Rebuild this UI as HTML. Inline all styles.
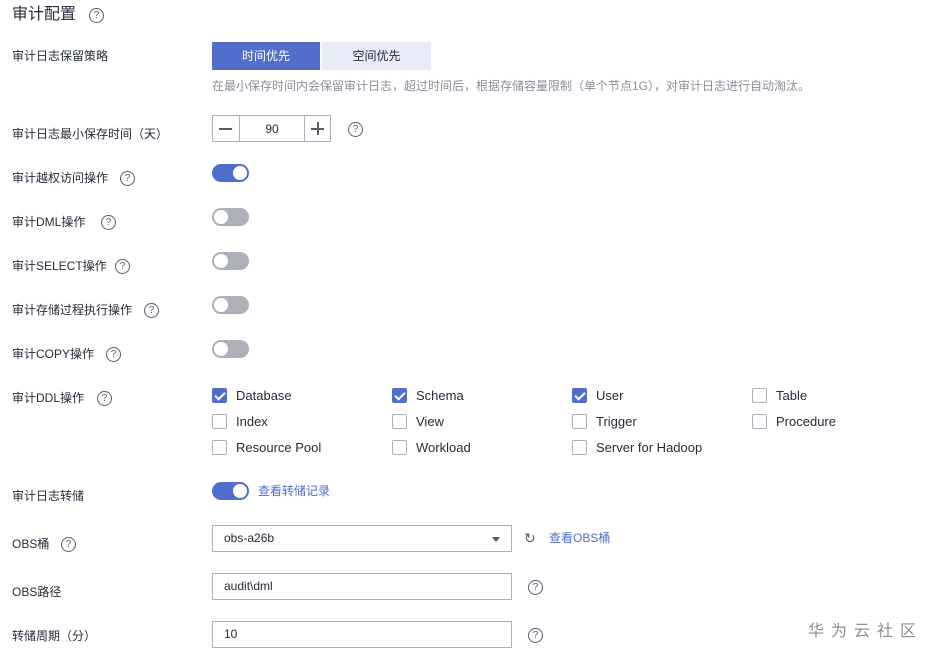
<!DOCTYPE html>
<html><head><meta charset="utf-8"><style>
*{margin:0;padding:0;box-sizing:border-box}
body{width:929px;height:657px;background:#fff;position:relative;overflow:hidden;font-family:"Liberation Sans","Noto Sans CJK SC",sans-serif;color:#252b3a;font-size:12px}
.a{position:absolute;white-space:nowrap}
.lbl{position:absolute;left:12px;font-size:12px;color:#252b3a;line-height:16px}
.q{position:absolute;width:15px;height:15px;border:1px solid #575d6c;border-radius:50%;font-size:10px;line-height:13px;text-align:center;color:#575d6c}
.tg{position:absolute;left:212px;width:37px;height:18px;border-radius:9px;background:#adb0b8}
.tg::after{content:"";position:absolute;left:2px;top:2px;width:14px;height:14px;border-radius:50%;background:#fff}
.tg.on{background:#526ecc}
.tg.on::after{left:21px}
.cb{position:absolute;width:15px;height:15px;border:1px solid #adb0b8;border-radius:2px;background:#fff}
.cb.on{background:#526ecc;border-color:#526ecc}
.cb.on::after{content:"";position:absolute;left:4px;top:1px;width:4px;height:8px;border:solid #fff;border-width:0 2px 2px 0;transform:rotate(45deg)}
.ct{position:absolute;font-size:13px;color:#252b3a;line-height:16px}
.inp{position:absolute;left:212px;width:300px;height:27px;border:1px solid #adb0b8;font-size:12px;line-height:25px;padding-left:11px}
.lnk{color:#526ecc}
</style></head><body>
<div class="a" style="left:12px;top:5px;font-size:16px;line-height:20px">审计配置</div>
<div class="q" style="left:89px;top:8px">?</div>

<div class="lbl" style="top:48px">审计日志保留策略</div>
<div class="a" style="left:212px;top:42px;width:108px;height:28px;background:#526ecc;color:#fff;text-align:center;line-height:28px;font-size:12px">时间优先</div>
<div class="a" style="left:322px;top:42px;width:109px;height:28px;background:#e8ecf8;color:#252b3a;text-align:center;line-height:28px;font-size:12px">空间优先</div>
<div class="a" style="left:212px;top:78px;font-size:12px;color:#8a8e99;line-height:16px">在最小保存时间内会保留审计日志，超过时间后，根据存储容量限制（单个节点1G），对审计日志进行自动淘汰。</div>

<div class="lbl" style="top:126px">审计日志最小保存时间（天）</div>
<div class="a" style="left:212px;top:115px;width:119px;height:27px;border:1px solid #adb0b8"></div>
<div class="a" style="left:239px;top:115px;width:1px;height:27px;background:#adb0b8"></div>
<div class="a" style="left:304px;top:115px;width:1px;height:27px;background:#adb0b8"></div>
<div class="a" style="left:219px;top:128px;width:13px;height:1.5px;background:#575d6c"></div>
<div class="a" style="left:311px;top:128px;width:13px;height:1.5px;background:#575d6c"></div>
<div class="a" style="left:317px;top:122px;width:1.5px;height:13px;background:#575d6c"></div>
<div class="a" style="left:240px;top:121px;width:64px;text-align:center;font-size:12px;line-height:16px">90</div>
<div class="q" style="left:348px;top:122px">?</div>

<div class="lbl" style="top:170px">审计越权访问操作</div><div class="q" style="left:120px;top:171px">?</div>
<div class="tg on" style="top:164px"></div>
<div class="lbl" style="top:214px">审计DML操作</div><div class="q" style="left:101px;top:215px">?</div>
<div class="tg" style="top:208px"></div>
<div class="lbl" style="top:258px">审计SELECT操作</div><div class="q" style="left:115px;top:259px">?</div>
<div class="tg" style="top:252px"></div>
<div class="lbl" style="top:302px">审计存储过程执行操作</div><div class="q" style="left:144px;top:303px">?</div>
<div class="tg" style="top:296px"></div>
<div class="lbl" style="top:346px">审计COPY操作</div><div class="q" style="left:106px;top:347px">?</div>
<div class="tg" style="top:340px"></div>

<div class="lbl" style="top:390px">审计DDL操作</div><div class="q" style="left:97px;top:391px">?</div>
<div class="cb on" style="left:212px;top:388px"></div><div class="ct" style="left:236px;top:388px">Database</div>
<div class="cb on" style="left:392px;top:388px"></div><div class="ct" style="left:416px;top:388px">Schema</div>
<div class="cb on" style="left:572px;top:388px"></div><div class="ct" style="left:596px;top:388px">User</div>
<div class="cb" style="left:752px;top:388px"></div><div class="ct" style="left:776px;top:388px">Table</div>
<div class="cb" style="left:212px;top:414px"></div><div class="ct" style="left:236px;top:414px">Index</div>
<div class="cb" style="left:392px;top:414px"></div><div class="ct" style="left:416px;top:414px">View</div>
<div class="cb" style="left:572px;top:414px"></div><div class="ct" style="left:596px;top:414px">Trigger</div>
<div class="cb" style="left:752px;top:414px"></div><div class="ct" style="left:776px;top:414px">Procedure</div>
<div class="cb" style="left:212px;top:440px"></div><div class="ct" style="left:236px;top:440px">Resource Pool</div>
<div class="cb" style="left:392px;top:440px"></div><div class="ct" style="left:416px;top:440px">Workload</div>
<div class="cb" style="left:572px;top:440px"></div><div class="ct" style="left:596px;top:440px">Server for Hadoop</div>

<div class="lbl" style="top:488px">审计日志转储</div>
<div class="tg on" style="top:482px"></div>
<div class="a lnk" style="left:258px;top:483px;font-size:12px;line-height:16px">查看转储记录</div>

<div class="lbl" style="top:536px">OBS桶</div><div class="q" style="left:61px;top:537px">?</div>
<div class="inp" style="top:525px;width:300px">obs-a26b</div>
<div class="a" style="left:492px;top:537px;width:0;height:0;border-left:4px solid transparent;border-right:4px solid transparent;border-top:5px solid #575d6c"></div>
<div class="a" style="left:524px;top:529px;font-size:14px;color:#575d6c;line-height:18px">&#x21bb;</div>
<div class="a lnk" style="left:549px;top:530px;font-size:12px;line-height:16px">查看OBS桶</div>

<div class="lbl" style="top:584px">OBS路径</div>
<div class="inp" style="top:573px">audit\dml</div>
<div class="q" style="left:528px;top:580px">?</div>

<div class="lbl" style="top:628px">转储周期（分）</div>
<div class="inp" style="top:621px">10</div>
<div class="q" style="left:528px;top:628px">?</div>

<div class="a" style="left:808px;top:622px;font-size:16px;color:#8e8e8e;letter-spacing:7px;line-height:20px">华为云社区</div>
</body></html>
